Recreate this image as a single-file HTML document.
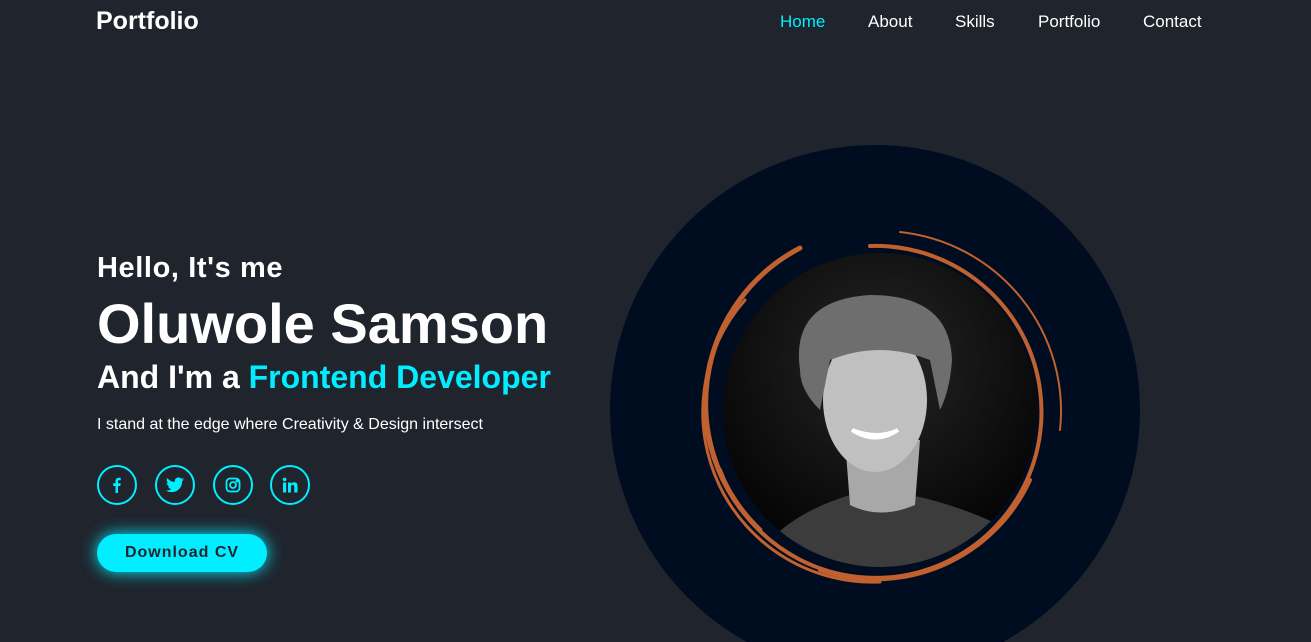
<!DOCTYPE html>
<html><head><meta charset="utf-8"><style>
*{margin:0;padding:0;box-sizing:border-box}
html,body{width:1311px;height:642px;overflow:hidden}
body{background:#1f242d;font-family:"Liberation Sans",Arial,sans-serif;color:#fff;position:relative}
.logo{position:absolute;left:96px;top:7px;font-size:25px;font-weight:bold}
nav{position:absolute;top:12px;left:0;font-size:17px}
nav a{position:absolute;color:#fff;text-decoration:none;white-space:nowrap}
h3{position:absolute;left:97px;font-weight:bold;white-space:nowrap}
.ic{position:absolute;top:465px;width:40px;height:40px;border:2px solid #0ef;border-radius:50%;display:flex;align-items:center;justify-content:center}
.btn{position:absolute;left:97px;top:534px;width:170px;height:38px;border-radius:20px;background:#0ef;box-shadow:0 0 16px #0ef;color:#1f242d;font-size:16px;font-weight:bold;letter-spacing:1px;display:flex;align-items:center;justify-content:center}
</style></head><body>
<div class="logo">Portfolio</div>
<nav><a style="left:780px;color:#0ef">Home</a><a style="left:868px">About</a><a style="left:955px">Skills</a><a style="left:1038px">Portfolio</a><a style="left:1143px">Contact</a></nav>
<h3 style="top:252px;font-size:29px;letter-spacing:0.6px">Hello, It's me</h3>
<h3 style="top:291px;font-size:56px">Oluwole Samson</h3>
<h3 style="top:359px;font-size:32px">And I'm a <span style="color:#0ef">Frontend Developer</span></h3>
<div style="position:absolute;left:97px;top:416px;font-size:16px">I stand at the edge where Creativity &amp; Design intersect</div>
<div class="ic" style="left:97px"><svg width="16" height="16" viewBox="0 0 16 16"><path d="M9 16V9h2.3l.4-2.7H9V4.6c0-.8.2-1.3 1.3-1.3h1.4V.9C11.4.8 10.6.8 9.8.8 7.9.8 6.5 2 6.5 4.2v2.1H4.2V9h2.3v7z" fill="#0ef"/></svg></div>
<div class="ic" style="left:155px"><svg width="18" height="16" viewBox="0 0 24 20"><path d="M24 2.4a10 10 0 0 1-2.8.8A5 5 0 0 0 23.3.4a10 10 0 0 1-3.1 1.2A4.9 4.9 0 0 0 11.8 6 14 14 0 0 1 1.7.9a4.9 4.9 0 0 0 1.5 6.6A4.9 4.9 0 0 1 1 6.9a4.9 4.9 0 0 0 3.9 4.9 4.9 4.9 0 0 1-2.2.1 4.9 4.9 0 0 0 4.6 3.4A9.9 9.9 0 0 1 0 17.3 14 14 0 0 0 7.5 19.5c9.1 0 14-7.5 14-14v-.6A10 10 0 0 0 24 2.4z" fill="#0ef"/></svg></div>
<div class="ic" style="left:213px"><svg width="16" height="16" viewBox="0 0 16 16" fill="none" stroke="#0ef" stroke-width="1.8"><rect x="1.5" y="1.5" width="13" height="13" rx="3.5"/><circle cx="8" cy="8" r="3"/><circle cx="12" cy="4" r=".6" fill="#0ef"/></svg></div>
<div class="ic" style="left:270px"><svg width="16" height="16" viewBox="0 0 16 16" fill="#0ef"><rect x="1" y="5.5" width="3.2" height="10"/><circle cx="2.6" cy="2.4" r="1.8"/><path d="M6 5.5h3v1.4c.5-.9 1.6-1.6 3.1-1.6 3 0 3.4 2 3.4 4.5v5.7h-3.2v-5c0-1.2 0-2.6-1.6-2.6s-1.8 1.2-1.8 2.5v5.1H6z"/></svg></div>
<div class="btn">Download CV</div>
<svg style="position:absolute;left:0;top:0;display:block" width="1311" height="642">
<defs><clipPath id="c"><circle cx="880" cy="410" r="157"/></clipPath><radialGradient id="bg" cx="0.5" cy="0.35" r="0.6"><stop offset="0" stop-color="#262626"/><stop offset="1" stop-color="#050505"/></radialGradient></defs>
<circle cx="875" cy="410" r="265" fill="#000c20"/>
<g clip-path="url(#c)">
<rect x="720" y="250" width="320" height="320" fill="url(#bg)"/>
<path d="M770 540 Q800 510 850 495 L910 495 Q960 505 1010 530 L1040 580 L760 580Z" fill="#3c3c3c"/>
<path d="M845 440 L850 505 Q880 520 915 505 L920 440Z" fill="#a8a8a8"/>
<ellipse cx="875" cy="400" rx="52" ry="72" fill="#c0c0c0"/>
<path d="M800 370 Q790 300 870 295 Q950 295 952 360 Q950 390 940 410 L930 360 Q880 340 830 360 L820 410 Q800 390 800 370Z" fill="#6e6e6e"/>
<path d="M852 430 Q876 445 898 430 Q878 440 852 430Z" fill="#fff" stroke="#fff" stroke-width="4"/>
</g>
<g fill="none" stroke="#c0612f" stroke-linecap="round">
<path d="M870 246 A166 166 0 1 1 720 470" stroke-width="4"/>
<path d="M800 248 A175 175 0 0 0 760 530" stroke-width="5"/>
<path d="M745 300 A170 170 0 0 0 880 582" stroke-width="3"/>
<path d="M900 232 A180 180 0 0 1 1060 430" stroke-width="2"/>
<path d="M1030 480 A170 170 0 0 1 820 570" stroke-width="4"/>
<path d="M720 330 A175 175 0 0 0 740 510" stroke-width="2"/>
</g>
</svg>
</body></html>
